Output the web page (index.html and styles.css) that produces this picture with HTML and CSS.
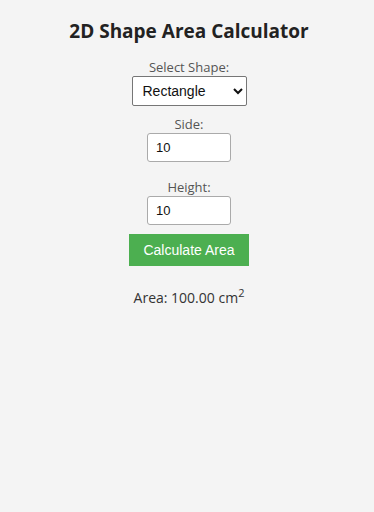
FILE: index.html
```html
<!DOCTYPE html>
<html lang="en">
<head>
    <meta charset="UTF-8">
    <meta name="viewport" content="width=device-width, initial-scale=1.0">
    <title>2D Shape Area Calculator</title>
    <link rel="stylesheet" href="styles.css">
</head>
<body>
    <div class="calculator">
        <h1>2D Shape Area Calculator</h1>
        <div class="field">
            <label for="shapeSelect">Select Shape:</label>
            <select id="shapeSelect">
                <option>Square</option>
                <option selected>Rectangle</option>
                <option>Circle</option>
                <option>Triangle</option>
            </select>
        </div>
        <div class="field">
            <label for="sideInput">Side:</label>
            <input type="number" id="sideInput" value="10">
        </div>
        <div class="field field-gap">
            <label for="heightInput">Height:</label>
            <input type="number" id="heightInput" value="10">
        </div>
        <button id="calculateBtn">Calculate Area</button>
        <p class="result">Area: 100.00 cm<sup>2</sup></p>
    </div>
</body>
</html>
```

FILE: styles.css
```css
body {
    font-family: 'Open Sans', sans-serif;
    margin: 0;
    background: #f4f4f4;
    color: #333;
}

.calculator {
    display: flex;
    flex-direction: column;
    align-items: center;
    padding: 18px 0 0 4px;
}

.calculator h1 {
    font-size: 19px;
    font-weight: 700;
    color: #222;
    margin: 0 0 15px;
}

.field {
    display: flex;
    flex-direction: column;
    align-items: center;
    margin-bottom: 10px;
}

.field-gap {
    margin: 7px 0 9px;
}

.field label {
    font-size: 13px;
    color: #555;
    line-height: 17px;
}

.field select {
    width: 115px;
    height: 30px;
    font-family: 'Liberation Sans', Arial, sans-serif;
    font-size: 14px;
    color: #111;
    background: #fff;
    border: 1px solid #767676;
    border-radius: 2px;
    padding: 0 6px;
}

.field input {
    width: 84px;
    height: 29px;
    box-sizing: border-box;
    font-family: 'Liberation Sans', Arial, sans-serif;
    font-size: 13px;
    color: #111;
    background: #fff;
    border: 1px solid #aaa;
    border-radius: 3px;
    padding: 0 8px;
    -moz-appearance: textfield;
}

.field input::-webkit-outer-spin-button,
.field input::-webkit-inner-spin-button {
    -webkit-appearance: none;
    margin: 0;
}

#calculateBtn {
    width: 120px;
    height: 32px;
    background-color: #4caf50;
    color: #fff;
    border: none;
    font-family: 'Liberation Sans', Arial, sans-serif;
    font-size: 14px;
    cursor: pointer;
}

.result {
    font-size: 14px;
    color: #333;
    margin: 19px 0 0;
}

.result sup {
    font-size: 11px;
}
```
